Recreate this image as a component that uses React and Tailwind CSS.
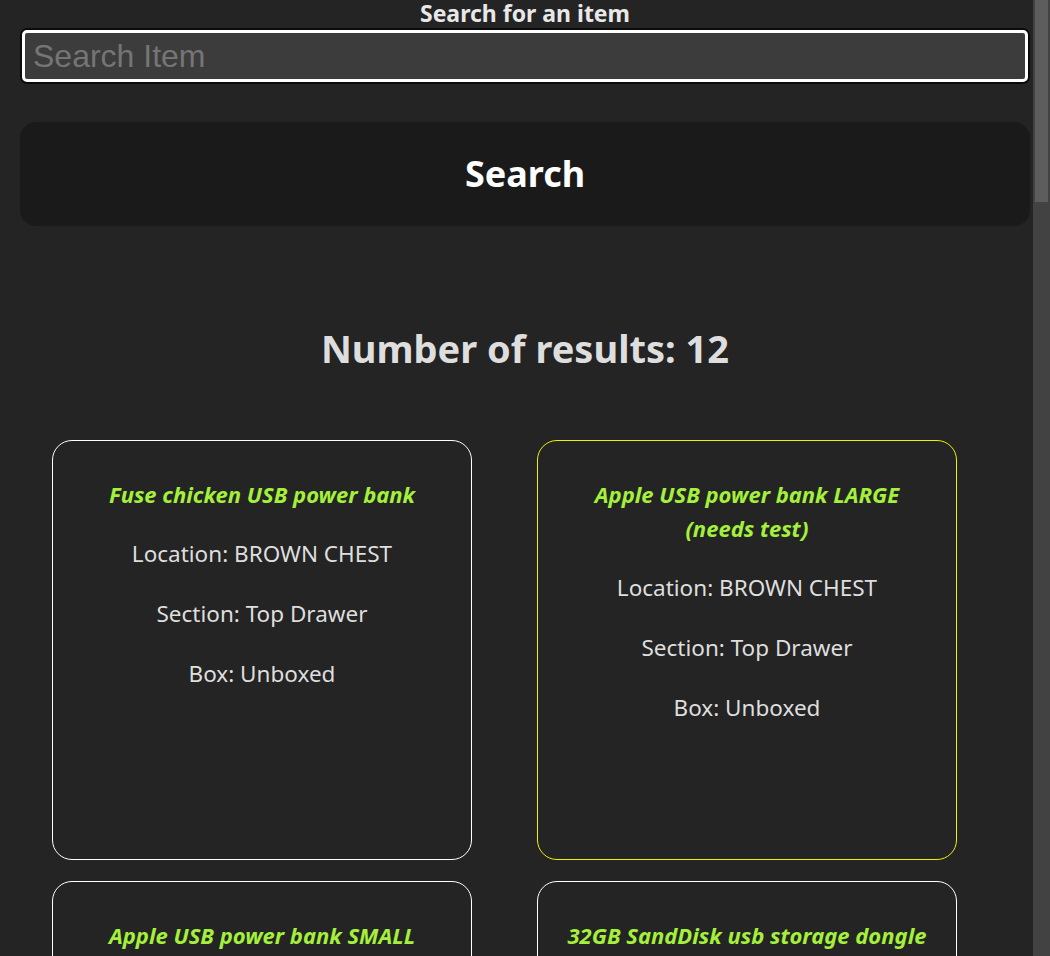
import { useState } from 'react'

const items = [
  { name: 'Fuse chicken USB power bank', location: 'BROWN CHEST', section: 'Top Drawer', box: 'Unboxed' },
  { name: 'Apple USB power bank LARGE (needs test)', location: 'BROWN CHEST', section: 'Top Drawer', box: 'Unboxed', flagged: true },
  { name: 'Apple USB power bank SMALL', location: 'BROWN CHEST', section: 'Top Drawer', box: 'Unboxed' },
  { name: '32GB SandDisk usb storage dongle', location: 'BROWN CHEST', section: 'Top Drawer', box: 'Unboxed' },
  { name: 'USB-C to USB-A adapter', location: 'BROWN CHEST', section: 'Top Drawer', box: 'Unboxed' },
  { name: 'USB wall charger', location: 'BROWN CHEST', section: 'Middle Drawer', box: 'Unboxed' },
  { name: 'Micro USB cable', location: 'BROWN CHEST', section: 'Middle Drawer', box: 'Cable Box' },
  { name: 'USB-C cable (2m)', location: 'BROWN CHEST', section: 'Middle Drawer', box: 'Cable Box' },
  { name: 'USB hub 4 port', location: 'DESK', section: 'Left Drawer', box: 'Unboxed' },
  { name: 'USB keyboard', location: 'DESK', section: 'Shelf', box: 'Unboxed' },
  { name: 'USB mouse', location: 'DESK', section: 'Shelf', box: 'Unboxed' },
  { name: 'USB fan', location: 'GARAGE', section: 'Shelf 2', box: 'Summer Box' },
]

function ItemCard({ item }) {
  return (
    <div
      className={`w-[420px] h-[420px] shrink-0 rounded-[20px] border pt-[36px] px-5 text-center ${
        item.flagged ? 'border-[#f0f000]' : 'border-white'
      }`}
    >
      <div className="flex flex-col gap-[26px] leading-[34px]">
        <h3 className="font-bold italic text-[22px] text-[#a4f03c]">{item.name}</h3>
        <p className="text-[22.5px]">Location: {item.location}</p>
        <p className="text-[22.5px]">Section: {item.section}</p>
        <p className="text-[22.5px]">Box: {item.box}</p>
      </div>
    </div>
  )
}

export default function App() {
  const [query, setQuery] = useState('')

  return (
    <div className="min-h-screen overflow-x-hidden bg-[#242424]">
      <div
        className="w-[1050px] px-5 text-[#dedede]"
        style={{ fontFamily: '"Noto Sans", "Open Sans", sans-serif' }}
      >
        <div className="flex flex-col">
          <label className="text-center text-[23px] font-bold leading-[27px] text-[#e8e8e8]">
            Search for an item
          </label>
          <div className="mt-[1px] rounded-[7px] bg-black/70 p-[2px]">
            <input
              value={query}
              onChange={e => setQuery(e.target.value)}
              placeholder="Search Item"
              className="block w-full h-[52px] rounded-[5px] border-[3px] border-white bg-[#3c3c3c] px-2 text-[32px] text-white placeholder:text-[#757575] outline-none"
              style={{ fontFamily: '"Liberation Sans", Arial, sans-serif' }}
            />
          </div>
        </div>

        <button className="mt-[38px] block w-full h-[104px] rounded-[16px] bg-[#1a1a1a] text-[36px] font-bold text-white">
          Search
        </button>

        <h2 className="mt-[100px] text-center text-[38px] font-bold leading-[44px]">
          Number of results: {items.length}
        </h2>

        <div className="mt-[70px] pl-8 pb-[1440px] flex flex-wrap gap-x-[65px] gap-y-[21px]">
          {items.map((item, i) => (
            <ItemCard key={i} item={item} />
          ))}
        </div>
      </div>

      {/* page scrollbar, drawn over the right edge */}
      <div className="fixed top-0 right-0 h-screen w-[17px] bg-[#424242] px-[2px]">
        <div className="h-[202px] w-full bg-[#5d5d5d]" />
      </div>
    </div>
  )
}
